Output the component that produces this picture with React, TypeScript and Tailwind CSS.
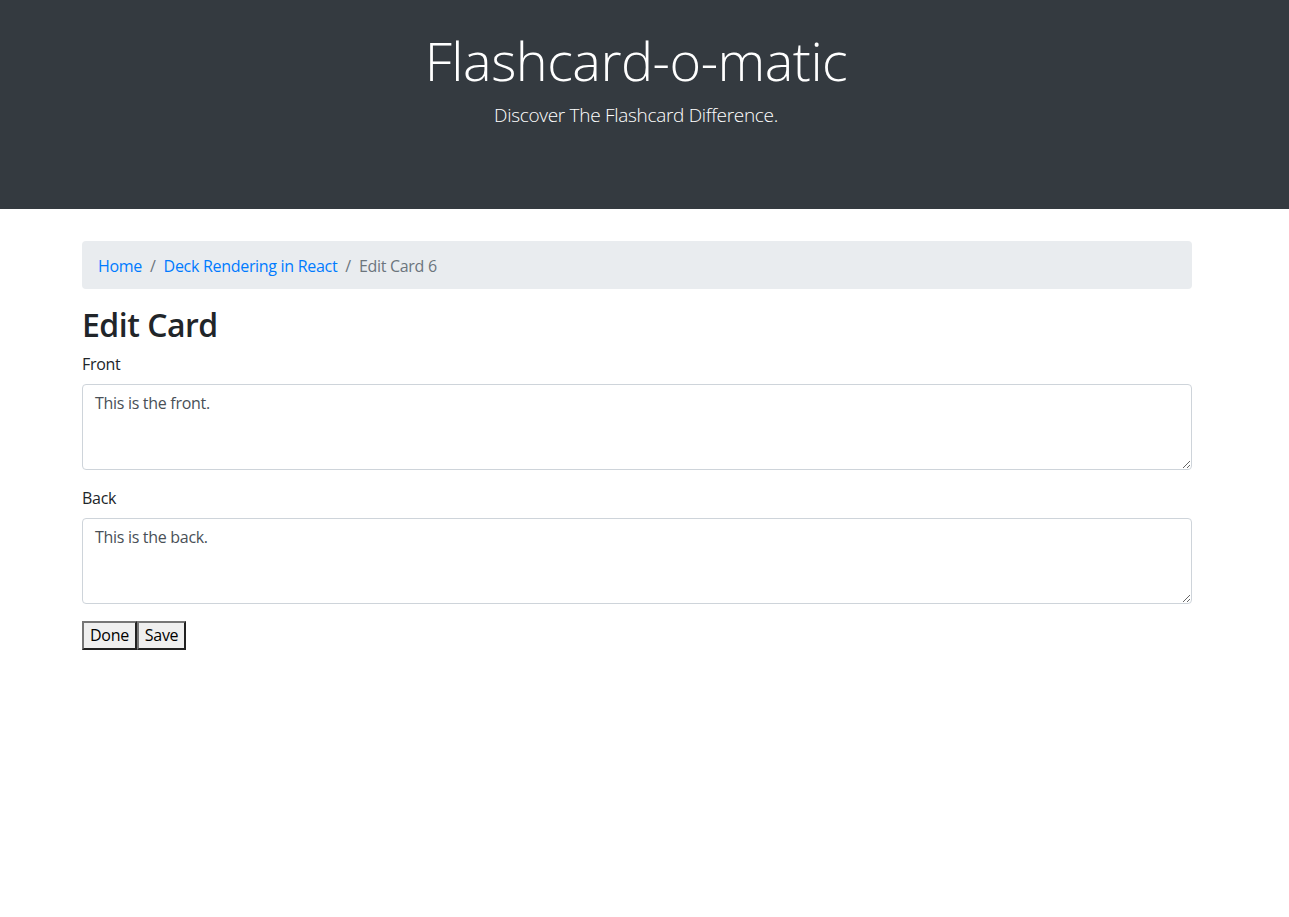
import { useState } from 'react'

const font = { fontFamily: '"Segoe UI", "Open Sans", "Noto Sans", sans-serif' }

export default function App() {
  const [front, setFront] = useState('This is the front.')
  const [back, setBack] = useState('This is the back.')

  return (
    <div className="min-h-[917px] bg-white text-base tracking-[-0.3px] text-[#212529]" style={font}>
      {/* Header */}
      <header className="h-[209px] bg-[#343a40] pr-[17px] text-center text-white">
        <h1 className="pt-[28px] text-[54px] font-light leading-[65px] tracking-[-0.5px]">Flashcard-o-matic</h1>
        <p className="mt-[7px] text-[19px] font-light leading-[30px] tracking-[-0.3px]">Discover The Flashcard Difference.</p>
      </header>

      <main className="ml-[82px] mt-[32px] w-[1110px]">
        {/* Breadcrumb */}
        <nav className="flex h-[48px] items-center rounded bg-[#e9ecef] px-4 pt-px text-base">
          <a href="#" className="text-[#007bff]">Home</a>
          <span className="px-2 text-[#6c757d]">/</span>
          <a href="#" className="text-[#007bff]">Deck Rendering in React</a>
          <span className="px-2 text-[#6c757d]">/</span>
          <span className="text-[#6c757d]">Edit Card 6</span>
        </nav>

        <h2 className="mt-[17px] mb-2 text-[32px] font-semibold leading-[38px] tracking-[-0.5px]">Edit Card</h2>

        <form onSubmit={(e) => e.preventDefault()}>
          <div className="mb-4">
            <label htmlFor="front" className="mb-2 block leading-6">Front</label>
            <textarea
              id="front"
              rows={3}
              value={front}
              onChange={(e) => setFront(e.target.value)}
              className="block h-[86px] w-full rounded border border-[#ced4da] px-3 py-1.5 leading-6 text-[#495057]"
            />
          </div>
          <div className="mb-[17px]">
            <label htmlFor="back" className="mb-2 block leading-6">Back</label>
            <textarea
              id="back"
              rows={3}
              value={back}
              onChange={(e) => setBack(e.target.value)}
              className="block h-[86px] w-full rounded border border-[#ced4da] px-3 py-1.5 leading-6 text-[#495057]"
            />
          </div>
          <div className="flex">
            <button type="button" className="h-[29px] border-2 border-[#767676] bg-[#efefef] px-1.5 leading-[25px] text-black" style={{ borderStyle: 'outset' }}>
              Done
            </button>
            <button type="submit" className="h-[29px] border-2 border-[#767676] bg-[#efefef] px-1.5 leading-[25px] text-black" style={{ borderStyle: 'outset' }}>
              Save
            </button>
          </div>
        </form>
      </main>
    </div>
  )
}
